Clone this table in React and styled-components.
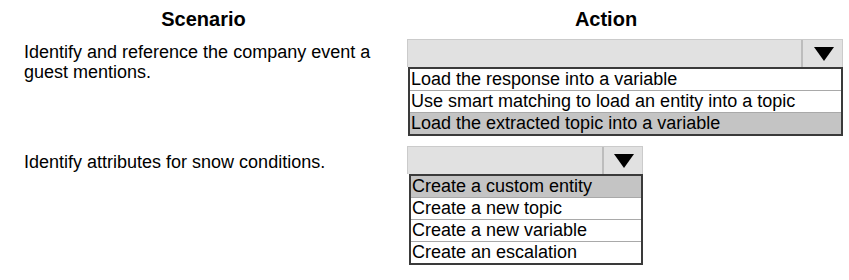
import React from "react";
import styled, { createGlobalStyle } from "styled-components";

const Global = createGlobalStyle`
  html, body { margin: 0; padding: 0; background: #fff; }
  body { font-family: "Liberation Sans", Arial, sans-serif; color: #000; }
`;

const Page = styled.div`
  position: relative;
  width: 849px;
  height: 280px;
  overflow: hidden;
  background: #fff;
`;

const Grid = styled.div`
  display: grid;
  grid-template-columns: 407px 442px;
  grid-template-rows: 39px 107px auto;
`;

const Heading = styled.div`
  font-weight: bold;
  font-size: 20px;
  line-height: 24px;
  padding-top: 7px;
  text-align: center;
  padding-right: ${(p) => p.$shiftRight || 0}px;
`;

const Scenario = styled.div`
  font-size: 18px;
  line-height: 20px;
  padding: ${(p) => p.$top}px 0 0 24px;
  max-width: 350px;
`;

const Select = styled.div`
  width: ${(p) => p.$width}px;
  display: flex;
  flex-direction: column;
`;

const Header = styled.div`
  height: 28px;
  box-sizing: border-box;
  display: flex;
  background: #e1e1e1;
  border: 1px solid #cbcbcb;
  border-bottom: none;
`;

const Field = styled.div`
  flex: 1;
`;

const ArrowBox = styled.div`
  width: ${(p) => p.$w}px;
  border-left: 2px solid #bdbdbd;
  display: flex;
  align-items: center;
  justify-content: center;
  padding-left: 2px;
`;

const List = styled.div`
  margin-left: ${(p) => p.$indent}px;
  border: 2px solid #3a3a3a;
  display: flex;
  flex-direction: column;
  background: #fff;
`;

const Option = styled.div`
  height: 21px;
  font-size: 18px;
  line-height: 21px;
  padding-left: 1px;
  white-space: nowrap;
  background: ${(p) => (p.$selected ? "#c4c4c4" : "#fff")};
  & + & { border-top: 1px solid #a9a9a9; }
`;

function Triangle() {
  return (
    <svg width="20" height="14" viewBox="0 0 20 14">
      <polygon points="0,0 20,0 10,14" fill="#000" />
    </svg>
  );
}

function Dropdown({ width, arrowW, indent, options, selected }) {
  return (
    <Select $width={width}>
      <Header>
        <Field />
        <ArrowBox $w={arrowW}>
          <Triangle />
        </ArrowBox>
      </Header>
      <List $indent={indent}>
        {options.map((o, i) => (
          <Option key={o} $selected={i === selected}>
            {o}
          </Option>
        ))}
      </List>
    </Select>
  );
}

export default function App() {
  return (
    <Page>
      <Global />
      <Grid>
        <Heading>Scenario</Heading>
        <Heading $shiftRight={44}>Action</Heading>
        <Scenario $top={3}>Identify and reference the company event a guest mentions.</Scenario>
        <div>
          <Dropdown
            width={436}
            arrowW={37}
            indent={1}
            selected={2}
            options={[
              "Load the response into a variable",
              "Use smart matching to load an entity into a topic",
              "Load the extracted topic into a variable",
            ]}
          />
        </div>
        <Scenario $top={6}>Identify attributes for snow conditions.</Scenario>
        <div>
          <Dropdown
            width={236}
            arrowW={36}
            indent={2}
            selected={0}
            options={[
              "Create a custom entity",
              "Create a new topic",
              "Create a new variable",
              "Create an escalation",
            ]}
          />
        </div>
      </Grid>
    </Page>
  );
}
